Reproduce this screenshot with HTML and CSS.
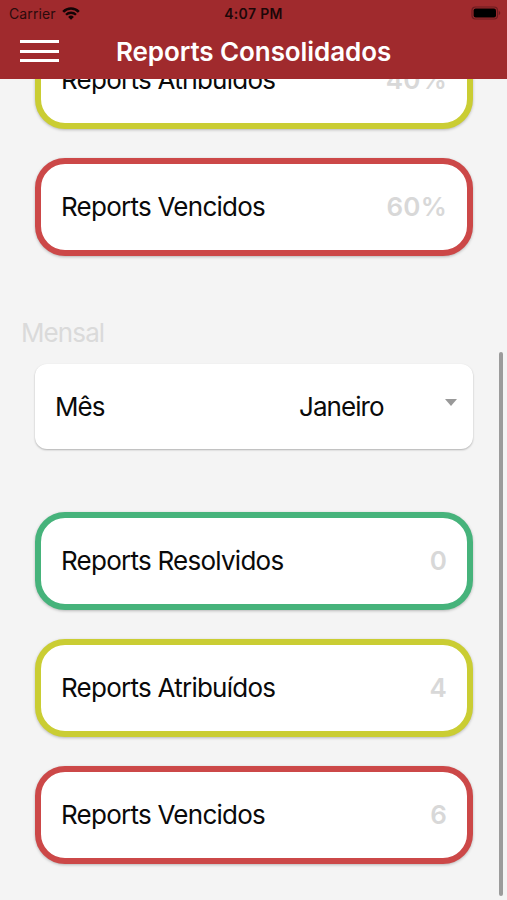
FILE: index.html
```html
<!DOCTYPE html>
<html lang="pt-BR">

<head>
    <meta charset="UTF-8">
    <meta name="viewport" content="width=device-width, initial-scale=1.0">
    <title>Reports Consolidados</title>
    <link rel="stylesheet" href="styles.css">
</head>

<body>
    <header class="header">
        <div class="status-bar">
            <div class="carrier">
                <span>Carrier</span>
                <svg class="wifi" viewBox="0 0 18 13" width="18" height="13">
                    <path d="M1.2 4.8a11 11 0 0 1 15.6 0" fill="none" stroke="#120405" stroke-width="2.6"/>
                    <path d="M4 7.8a7.1 7.1 0 0 1 10 0" fill="none" stroke="#120405" stroke-width="2.3"/>
                    <path d="M9 12.8L6.1 9.9a4.1 4.1 0 0 1 5.8 0z" fill="#120405"/>
                </svg>
            </div>
            <span class="time">4:07 PM</span>
            <svg class="battery" viewBox="0 0 30 14" width="30" height="14">
                <rect x="1" y="1" width="25.5" height="12" rx="3.5" fill="none" stroke="#6b1c20" stroke-width="1.2"/>
                <rect x="2.6" y="2.6" width="22.4" height="8.8" rx="2" fill="#000"/>
                <path d="M27.8 5v4q1.5-.6 1.5-2t-1.5-2z" fill="#6b1c20"/>
            </svg>
        </div>
        <div class="nav-bar">
            <button class="menu" aria-label="Menu">
                <span></span>
                <span></span>
                <span></span>
            </button>
            <h1 class="title">Reports Consolidados</h1>
        </div>
    </header>

    <main class="content">
        <div class="cards cards-top">
            <div class="card yellow">
                <span class="label">Reports Atribuídos</span>
                <span class="value">40%</span>
            </div>
            <div class="card red">
                <span class="label">Reports Vencidos</span>
                <span class="value">60%</span>
            </div>
        </div>

        <h2 class="section">Mensal</h2>
        <div class="select">
            <span class="select-label">Mês</span>
            <span class="select-value">Janeiro</span>
            <span class="arrow"></span>
        </div>

        <div class="cards">
            <div class="card green">
                <span class="label">Reports Resolvidos</span>
                <span class="value">0</span>
            </div>
            <div class="card yellow">
                <span class="label">Reports Atribuídos</span>
                <span class="value">4</span>
            </div>
            <div class="card red">
                <span class="label">Reports Vencidos</span>
                <span class="value">6</span>
            </div>
        </div>
    </main>

    <div class="scrollbar"></div>
</body>

</html>
```
FILE: styles.css
```css
* {
    box-sizing: border-box;
}

body {
    margin: 0;
    height: 900px;
    display: flex;
    flex-direction: column;
    font-family: Inter, "Liberation Sans", sans-serif;
    background: #f4f4f4;
    color: #0a0a0a;
    overflow: hidden;
}

.header {
    flex: none;
    height: 79px;
    background: #a02a2d;
}

.status-bar {
    display: grid;
    grid-template-columns: 1fr auto 1fr;
    align-items: center;
    height: 27px;
    padding: 0 6px 0 9px;
    font-size: 14px;
    color: #2a0b0c;
}

.carrier {
    display: flex;
    align-items: center;
    gap: 6px;
    letter-spacing: 0.1px;
}

.wifi {
    margin-bottom: 1px;
}

.time {
    font-weight: 600;
    letter-spacing: 0.35px;
    margin-right: 3px;
    color: #1c0708;
}

.battery {
    justify-self: end;
    margin-bottom: 1px;
}

.nav-bar {
    display: flex;
    align-items: center;
    height: 48px;
    padding-left: 20px;
}

.menu {
    display: flex;
    flex-direction: column;
    gap: 6.5px;
    width: 39px;
    margin-right: 57px;
    padding: 0;
    border: none;
    background: none;
}

.menu span {
    height: 3px;
    background: white;
}

.title {
    margin: 0;
    padding-top: 1px;
    font-size: 26px;
    font-weight: 600;
    letter-spacing: -0.08px;
    color: white;
    white-space: nowrap;
}

.content {
    flex: 1;
    min-height: 0;
    padding: 0 34px 0 35px;
    overflow: hidden;
}

.cards {
    display: flex;
    flex-direction: column;
    gap: 29px;
}

/* list is scrolled, first card sits partly under the header */
.cards-top {
    margin-top: -48px;
}

.card {
    display: flex;
    justify-content: space-between;
    align-items: center;
    height: 98px;
    padding: 0 20px 2px;
    background: white;
    border: 6px solid;
    border-radius: 30px;
    box-shadow: 0 1px 3px rgba(0, 0, 0, 0.25);
}

.yellow {
    border-color: #cacd33;
}

.red {
    border-color: #cc4848;
}

.green {
    border-color: #46b37b;
}

.label {
    font-size: 26px;
    letter-spacing: -0.75px;
    color: #0a0a0a;
}

.value {
    font-size: 26px;
    font-weight: 600;
    letter-spacing: 0.2px;
    color: #d8d8d8;
}

.section {
    margin: 61px 0 15px -14px;
    font-size: 26px;
    line-height: 32px;
    font-weight: 400;
    letter-spacing: -0.9px;
    color: #dadada;
}

.select {
    display: flex;
    align-items: center;
    height: 85px;
    margin-bottom: 63px;
    padding: 0 16px 0 20px;
    font-size: 26px;
    letter-spacing: -0.95px;
    background: white;
    border-radius: 12px;
    box-shadow: 0 1px 2px rgba(0, 0, 0, 0.28);
}

.select-label {
    width: 244px;
}

.arrow {
    margin: -9px 0 0 auto;
    border: 6px solid transparent;
    border-top: 7px solid #999;
    border-bottom: none;
}

.scrollbar {
    position: absolute;
    top: 352px;
    right: 4px;
    width: 4px;
    height: 544px;
    border-radius: 2px;
    background: #9b9b9b;
}
```
